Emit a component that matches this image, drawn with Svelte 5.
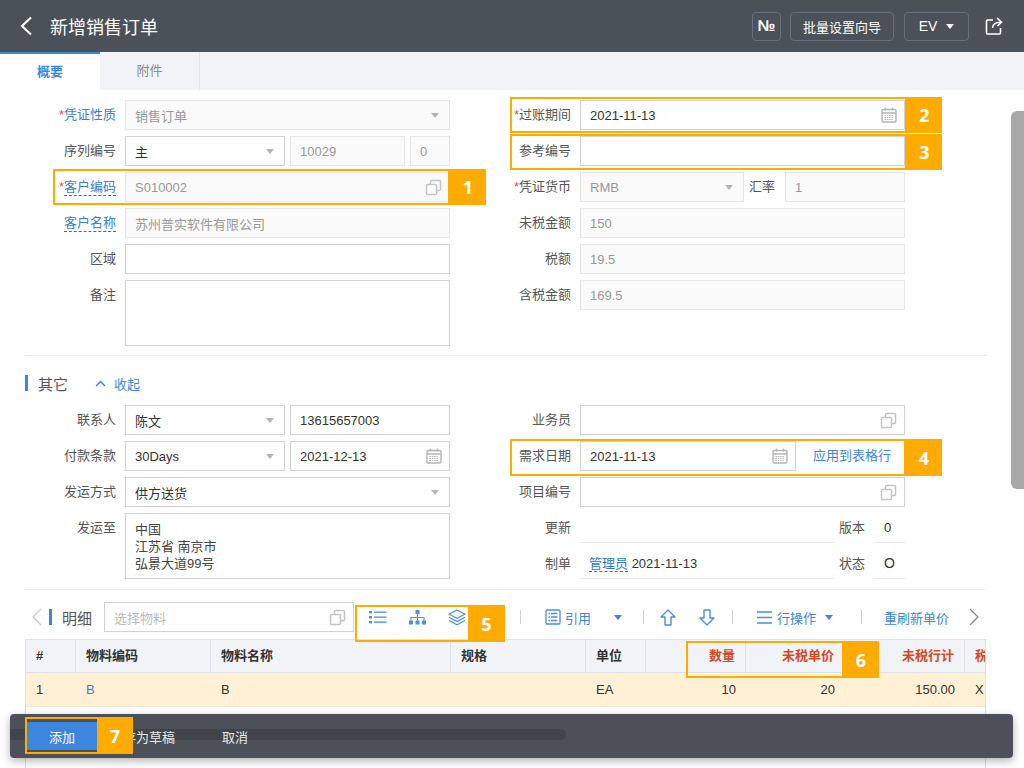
<script>
  const marks = [
    { n: 1, x: 53, y: 169, w: 397, h: 36, bx: 450, bw: 36 },
    { n: 2, x: 510, y: 97, w: 397, h: 36, bx: 907, bw: 35 },
    { n: 3, x: 510, y: 134, w: 397, h: 36, bx: 907, bw: 35 },
    { n: 4, x: 510, y: 439, w: 396, h: 37, bx: 906, bw: 36 },
    { n: 5, x: 355, y: 605, w: 115, h: 37, bx: 468, bw: 37 },
    { n: 6, x: 686, y: 641, w: 158, h: 37, bx: 843, bw: 36 },
    { n: 7, x: 25, y: 717, w: 74, h: 37, bx: 97, bw: 36 },
  ];

  const columns = [
    { label: '#', w: 50 },
    { label: '物料编码', w: 135 },
    { label: '物料名称', w: 240 },
    { label: '规格', w: 135 },
    { label: '单位', w: 60 },
    { label: '数量', w: 100, right: true, warn: true },
    { label: '未税单价', w: 99, right: true, warn: true },
    { label: '未税行计', w: 120, right: true, warn: true },
    { label: '税', w: 22, warn: true },
  ];

  const row = [
    { text: '1' },
    { text: 'B', link: true },
    { text: 'B' },
    { text: '' },
    { text: 'EA' },
    { text: '10', right: true },
    { text: '20', right: true },
    { text: '150.00', right: true },
    { text: 'X' },
  ];
</script>

{#snippet copyIcon()}
  <svg class="ico" width="17" height="17" viewBox="0 0 17 17" fill="none" stroke="#c4c4c4" stroke-width="1.5">
    <rect x="5.5" y="1.5" width="10" height="10" rx="1" />
    <rect x="1.5" y="5.5" width="10" height="10" rx="1" fill="#fff" />
  </svg>
{/snippet}

{#snippet calIcon()}
  <svg class="ico" width="16" height="16" viewBox="0 0 16 16" fill="none" stroke="#b5b5b5" stroke-width="1.4">
    <rect x="1" y="2.5" width="14" height="12.5" rx="1" />
    <path d="M1 6h14M4.5 0.5v3M11.5 0.5v3" />
    <path d="M3.5 8.500h9M3.500 10.500h9M3.500 12.500h9" stroke-width="1.200" stroke-dasharray="1.500 0.800" />
  </svg>
{/snippet}

{#snippet caret()}
  <span class="caret"></span>
{/snippet}

<div class="page">
  <header class="topbar">
    <svg class="back" width="14" height="20" viewBox="0 0 14 20" fill="none" stroke="#fff" stroke-width="2.2">
      <path d="M12 1.5 3 10l9 8.5" />
    </svg>
    <h1 class="title">新增销售订单</h1>
    <button class="tb-btn num">№</button>
    <button class="tb-btn wizard">批量设置向导</button>
    <button class="tb-btn ev">EV <span class="caret white"></span></button>
    <svg class="share" width="18" height="18" viewBox="0 0 18 18" fill="none" stroke="#fff" stroke-width="1.6">
      <path d="M8 3H2.5a1 1 0 0 0-1 1v12a1 1 0 0 0 1 1h12a1 1 0 0 0 1-1v-5" />
      <path d="M7.5 11c.3-3.500 3-5.800 8-5.800" />
      <path d="M12 1l4.500 4.200L12.500 9" />
    </svg>
  </header>

  <nav class="tabs">
    <div class="tab active">概要</div>
    <div class="tab">附件</div>
  </nav>

  <main class="content">
    <section class="form">
      <div class="col">
        <div class="row">
          <span class="lab link"><i>*</i>凭证性质</span>
          <div class="field off grow"><span>销售订单</span>{@render caret()}</div>
        </div>
        <div class="row">
          <span class="lab">序列编号</span>
          <div class="field w160"><span>主</span>{@render caret()}</div>
          <div class="field off w115"><span>10029</span></div>
          <div class="field off grow"><span>0</span></div>
        </div>
        <div class="row">
          <span class="lab link"><i>*</i><u>客户编码</u></span>
          <div class="field off grow"><span>S010002</span>{@render copyIcon()}</div>
        </div>
        <div class="row">
          <span class="lab link"><u>客户名称</u></span>
          <div class="field off grow"><span>苏州普实软件有限公司</span></div>
        </div>
        <div class="row">
          <span class="lab">区域</span>
          <div class="field grow"></div>
        </div>
        <div class="row">
          <span class="lab">备注</span>
          <div class="field grow tall"></div>
        </div>
      </div>

      <div class="col">
        <div class="row">
          <span class="lab"><i>*</i>过账期间</span>
          <div class="field grow"><span>2021-11-13</span>{@render calIcon()}</div>
        </div>
        <div class="row">
          <span class="lab">参考编号</span>
          <div class="field grow"></div>
        </div>
        <div class="row">
          <span class="lab"><i>*</i>凭证货币</span>
          <div class="field off w165"><span>RMB</span>{@render caret()}</div>
          <span class="lab-inline">汇率</span>
          <div class="field off grow"><span>1</span></div>
        </div>
        <div class="row">
          <span class="lab">未税金额</span>
          <div class="field off grow"><span>150</span></div>
        </div>
        <div class="row">
          <span class="lab">税额</span>
          <div class="field off grow"><span>19.5</span></div>
        </div>
        <div class="row">
          <span class="lab">含税金额</span>
          <div class="field off grow"><span>169.5</span></div>
        </div>
      </div>
    </section>

    <div class="rule first"></div>

    <div class="section-head">
      <span class="bar"></span>
      <span class="sec-title">其它</span>
      <svg class="chev" width="11" height="7" viewBox="0 0 11 7" fill="none" stroke="#3d86de" stroke-width="1.5">
        <path d="M1 6l4.500-4.500L10 6" />
      </svg>
      <span class="collapse">收起</span>
    </div>

    <section class="form">
      <div class="col">
        <div class="row">
          <span class="lab">联系人</span>
          <div class="field w160"><span>陈文</span>{@render caret()}</div>
          <div class="field grow"><span>13615657003</span></div>
        </div>
        <div class="row">
          <span class="lab">付款条款</span>
          <div class="field w160"><span>30Days</span>{@render caret()}</div>
          <div class="field grow"><span>2021-12-13</span>{@render calIcon()}</div>
        </div>
        <div class="row">
          <span class="lab">发运方式</span>
          <div class="field grow"><span>供方送货</span>{@render caret()}</div>
        </div>
        <div class="row">
          <span class="lab">发运至</span>
          <div class="field grow tall address">中国<br />江苏省 南京市<br />弘景大道99号</div>
        </div>
      </div>

      <div class="col">
        <div class="row">
          <span class="lab">业务员</span>
          <div class="field grow">{@render copyIcon()}</div>
        </div>
        <div class="row">
          <span class="lab">需求日期</span>
          <div class="field w216"><span>2021-11-13</span>{@render calIcon()}</div>
          <span class="apply">应用到表格行</span>
        </div>
        <div class="row">
          <span class="lab">项目编号</span>
          <div class="field grow">{@render copyIcon()}</div>
        </div>
        <div class="row">
          <span class="lab">更新</span>
          <div class="plain w254"></div>
          <span class="lab-inline ver">版本</span>
          <div class="plain grow"><span>0</span></div>
        </div>
        <div class="row">
          <span class="lab">制单</span>
          <div class="plain w254 maker"><u class="user">管理员</u> 2021-11-13</div>
          <span class="lab-inline ver">状态</span>
          <div class="plain grow"><span class="state">O</span></div>
        </div>
      </div>
    </section>

    <div class="rule second"></div>

    <div class="toolbar">
      <svg class="nav-l" width="10" height="18" viewBox="0 0 10 18" fill="none" stroke="#c9c9c9" stroke-width="1.3">
        <path d="M9 1 1 9l8 8" />
      </svg>
      <span class="bar tall-bar"></span>
      <span class="sec-title detail">明细</span>
      <div class="pick"><span>选择物料</span>{@render copyIcon()}</div>

      <svg class="t-list" width="18" height="14" viewBox="0 0 18 14" fill="#4a8fe0">
        <rect x="0" y="1" width="3" height="2.400" />
        <rect x="0" y="6" width="3" height="2.400" />
        <rect x="0" y="11" width="3" height="2.400" />
        <rect x="5" y="1.500" width="12.500" height="1.300" />
        <rect x="5" y="6.500" width="12.500" height="1.300" />
        <rect x="5" y="11.500" width="12.500" height="1.300" />
      </svg>
      <svg class="t-org" width="17" height="15" viewBox="0 0 17 15" fill="#4a8fe0">
        <rect x="6.500" y="0" width="4" height="4" />
        <rect x="0" y="10.500" width="4" height="4" />
        <rect x="6.500" y="10.500" width="4" height="4" />
        <rect x="13" y="10.500" width="4" height="4" />
        <path d="M8 4h1v3h6.500v3.500h-1V8h-5.500v2.500H8V8H2.500v2.500h-1V7H8z" />
      </svg>
      <svg class="t-stack" width="18" height="17" viewBox="0 0 18 17" fill="none" stroke="#4a8fe0" stroke-width="1.200">
        <path d="M9 1l8 4.200-8 4.200-8-4.200z" />
        <path d="M1 8.300l8 4.200 8-4.200" />
        <path d="M1 11.500l8 4.200 8-4.200" />
      </svg>

      <span class="sep s1"></span>
      <svg class="t-doc" width="16" height="16" viewBox="0 0 16 16" fill="none" stroke="#4a8fe0" stroke-width="1.300">
        <rect x="1" y="1" width="14" height="14" rx="1" />
        <path d="M3.500 4.500h1.500M6 4.500h6.500M3.500 8h1.500M6 8h6.500M3.500 11.500h1.500M6 11.500h6.500" />
      </svg>
      <span class="tool-text quote">引用</span>
      <span class="caret blue c1"></span>
      <span class="sep s2"></span>
      <svg class="t-up" width="16" height="17" viewBox="0 0 16 17" fill="none" stroke="#4a8fe0" stroke-width="1.400">
        <path d="M8 1 1 8h4v8h6V8h4z" stroke-linejoin="round" />
      </svg>
      <svg class="t-down" width="16" height="17" viewBox="0 0 16 17" fill="none" stroke="#4a8fe0" stroke-width="1.400">
        <path d="M8 16 1 9h4V1h6v8h4z" stroke-linejoin="round" />
      </svg>
      <span class="sep s3"></span>
      <svg class="t-lines" width="15" height="13" viewBox="0 0 15 13" fill="none" stroke="#4a8fe0" stroke-width="1.300">
        <path d="M0 1h15M0 6.500h15M0 12h15" />
      </svg>
      <span class="tool-text rowop">行操作</span>
      <span class="caret blue c2"></span>
      <span class="sep s4"></span>
      <span class="tool-text refresh">重刷新单价</span>
      <svg class="nav-r" width="10" height="18" viewBox="0 0 10 18" fill="none" stroke="#888" stroke-width="1.300">
        <path d="M1 1l8 8-8 8" />
      </svg>
    </div>

    <div class="table">
      <div class="thead">
        {#each columns as c}
          <div class="th" class:right={c.right} class:warn={c.warn} style="width:{c.w}px">{c.label}</div>
        {/each}
      </div>
      <div class="tr">
        {#each row as cell, i}
          <div class="td" class:right={cell.right} class:tlink={cell.link} style="width:{columns[i].w}px">{cell.text}</div>
        {/each}
      </div>
    </div>
  </main>

  <div class="scroll-thumb"></div>

  <footer class="actionbar">
    <span class="hscroll"></span>
    <button class="act primary">添加</button>
    <button class="act draft">保存为草稿</button>
    <button class="act cancel">取消</button>
  </footer>

  {#each marks as m}
    <div class="mark" style="left:{m.x}px;top:{m.y}px;width:{m.w}px;height:{m.h}px"></div>
    <div class="badge" style="left:{m.bx}px;top:{m.y}px;width:{m.bw}px;height:{m.h}px">{m.n}</div>
  {/each}
</div>

<style>
  :global(body) {
    margin: 0;
    font-family: "Liberation Sans", "Noto Sans CJK SC", sans-serif;
    font-size: 13px;
    color: #333;
  }

  .page {
    position: relative;
    width: 1024px;
    height: 768px;
    overflow: hidden;
    background: #fff;
  }

  .topbar {
    display: flex;
    align-items: center;
    height: 52px;
    background: #4b5158;
    color: #fff;
  }

  .back {
    margin-left: 19px;
  }

  .title {
    margin: 0 0 0 17px;
    font-size: 18px;
    font-weight: 400;
    color: #fff;
    flex: 1;
  }

  .tb-btn {
    height: 29px;
    padding: 0;
    background: transparent;
    border: 1px solid #66717f;
    border-radius: 4px;
    color: #fff;
    font: inherit;
    font-size: 13px;
  }

  .num {
    width: 29px;
    font-weight: 700;
    font-size: 16px;
  }

  .wizard {
    width: 104px;
    margin-left: 9px;
  }

  .ev {
    width: 65px;
    margin-left: 10px;
    font-size: 14px;
  }

  .share {
    margin: 0 21px 0 16px;
  }

  .tabs {
    display: flex;
    height: 38px;
    background: #f2f3f7;
  }

  .tab {
    width: 99px;
    line-height: 38px;
    text-align: center;
    color: #8a8a8a;
    border-right: 1px solid #e2e3e7;
  }

  .tab.active {
    width: 100px;
    box-sizing: border-box;
    border-right: 0;
    border-top: 2px solid #3d86de;
    line-height: 36px;
    background: #fff;
    color: #3d86de;
    font-weight: 700;
  }

  .content {
    width: 962px;
    padding: 10px 0 0 25px;
  }

  .form {
    display: grid;
    grid-template-columns: 425px 425px;
    column-gap: 30px;
  }

  .col {
    display: flex;
    flex-direction: column;
    gap: 6px;
  }

  .row {
    display: flex;
    align-items: flex-start;
    gap: 5px;
  }

  .lab {
    width: 91px;
    margin-right: 4px;
    line-height: 30px;
    text-align: right;
    color: #555;
    white-space: nowrap;
  }

  .lab i {
    color: #f0502d;
    font-style: normal;
  }

  .lab.link {
    color: #3d7fd0;
  }

  .lab u {
    text-decoration: none;
    border-bottom: 1px dashed #2f6fc0;
    padding-bottom: 1px;
  }

  .lab-inline {
    width: 31px;
    line-height: 30px;
    color: #555;
    white-space: nowrap;
  }

  .field {
    box-sizing: border-box;
    display: flex;
    align-items: center;
    justify-content: space-between;
    height: 30px;
    padding: 0 9px;
    border: 1px solid #d2d2d2;
    background: #fff;
    color: #333;
    white-space: nowrap;
  }

  .field.off {
    background: #fafafa;
    border-color: #e6e6e6;
    color: #999;
  }

  .field:empty {
    padding: 0;
  }

  .grow {
    flex: 1;
    min-width: 0;
  }

  .tall {
    height: 66px;
  }

  .w160 { width: 160px; }
  .w115 { width: 115px; }
  .w165 { width: 164px; }
  .w216 { width: 216px; }
  .w254 { width: 254px; }

  .field .ico {
    margin-left: auto;
    margin-right: -2px;
  }

  .caret {
    display: inline-block;
    width: 0;
    height: 0;
    margin-left: auto;
    margin-right: 1px;
    border-left: 4.5px solid transparent;
    border-right: 4.5px solid transparent;
    border-top: 5px solid #b5b5b5;
  }

  .caret.white {
    margin: 0 0 2px 5px;
    border-top-color: #fff;
  }

  .caret.blue {
    margin: 0;
    border-top-color: #3d86de;
  }

  .address {
    display: block;
    padding-top: 7px;
    line-height: 17px;
    color: #444;
  }

  .apply {
    margin-left: 12px;
    line-height: 30px;
    color: #3d86de;
  }

  .plain {
    box-sizing: border-box;
    height: 30px;
    line-height: 29px;
    border-bottom: 1px solid #eaeaea;
  }

  .plain.grow {
    padding-left: 10px;
  }

  .ver {
    width: 30px;
  }

  .state {
    font-size: 14px;
  }

  .maker {
    padding-left: 9px;
  }

  .user {
    text-decoration: none;
    color: #2f78d0;
    border-bottom: 1px dashed #2f6fc0;
  }

  .rule {
    height: 1px;
    background: #eee;
  }

  .rule.first {
    margin-top: 9px;
  }

  .rule.second {
    margin-top: 10px;
    width: 960px;
  }

  .section-head {
    display: flex;
    align-items: center;
    height: 49px;
    padding-top: 5px;
    box-sizing: border-box;
  }

  .bar {
    width: 3px;
    height: 16px;
    background: #3d86de;
  }

  .sec-title {
    margin-left: 10px;
    font-size: 15px;
    color: #555;
  }

  .chev {
    margin-left: 27px;
  }

  .collapse {
    margin-left: 8px;
    color: #3d86de;
  }

  .toolbar {
    position: relative;
    display: flex;
    align-items: center;
    height: 30px;
    margin-top: 12px;
  }

  /* spacing along the row, tuned item by item */
  .nav-l { margin-left: 7px; }
  .tall-bar { margin-left: 7px; }
  .detail { margin-left: 10px; }

  .pick {
    box-sizing: border-box;
    display: flex;
    align-items: center;
    justify-content: space-between;
    width: 250px;
    height: 30px;
    margin-left: 12px;
    padding: 0 7px 0 9px;
    border: 1px solid #d2d2d2;
    color: #bbb;
  }

  .t-list { margin-left: 15px; }
  .t-org { margin-left: 22px; }
  .t-stack { margin-left: 22px; }

  .sep {
    width: 1px;
    height: 14px;
    background: #cfcfcf;
  }

  .s1 { margin-left: 54px; }
  .t-doc { margin-left: 24px; }

  .tool-text {
    color: #3d86de;
    white-space: nowrap;
  }

  .quote { margin-left: 4px; }
  .c1 { margin-left: 23px !important; }
  .s2 { margin-left: 21px; }
  .t-up { margin-left: 16px; }
  .t-down { margin-left: 23px; }
  .s3 { margin-left: 17px; }
  .t-lines { margin-left: 24px; }
  .rowop { margin-left: 5px; }
  .c2 { margin-left: 9px !important; }
  .s4 { margin-left: 28px; }
  .refresh { margin-left: 22px; }
  .nav-r { margin-left: 20px; }

  .table {
    box-sizing: border-box;
    width: 961px;
    height: 140px;
    margin-top: 7px;
    border: 1px solid #dfe1e6;
    border-bottom: 0;
    overflow: hidden;
  }

  .thead,
  .tr {
    display: flex;
    width: 1000px;
  }

  .thead {
    height: 32px;
    background: #f2f3f7;
    border-bottom: 1px solid #dfe1e6;
  }

  .th {
    box-sizing: border-box;
    flex: none;
    padding: 0 10px;
    line-height: 32px;
    font-weight: 700;
    color: #333;
    border-right: 1px solid #dfe1e6;
    white-space: nowrap;
    overflow: hidden;
  }

  .th.warn {
    color: #d8481c;
  }

  .th:last-child {
    border-right: 0;
  }

  .tr {
    height: 33px;
    background: #fff0d6;
    border-bottom: 1px solid #f5e6cc;
  }

  .td {
    box-sizing: border-box;
    flex: none;
    padding: 0 10px;
    line-height: 33px;
    color: #333;
    white-space: nowrap;
    overflow: hidden;
  }

  .right {
    text-align: right;
  }

  .tlink {
    color: #3d7fd0;
  }

  .scroll-thumb {
    position: absolute;
    left: 1011px;
    top: 111px;
    width: 13px;
    height: 378px;
    background: #a8a8a8;
    border-radius: 6px 0 0 6px;
  }

  .actionbar {
    position: absolute;
    left: 10px;
    top: 714px;
    width: 1003px;
    height: 44px;
    display: flex;
    align-items: center;
    background: rgba(72, 78, 86, 0.98);
    border-radius: 4px;
    box-shadow: 0 3px 8px rgba(0, 0, 0, 0.3);
  }

  .hscroll {
    position: absolute;
    left: 0;
    top: 15px;
    width: 556px;
    height: 11px;
    background: #40454c;
    border-radius: 0 6px 6px 0;
  }

  .act {
    position: relative;
    padding: 0;
    border: 0;
    background: transparent;
    color: #e8e8e8;
    font: inherit;
    white-space: nowrap;
  }

  .primary {
    width: 70px;
    height: 28px;
    margin-left: 17px;
    background: #3d86de;
    color: #fff;
  }

  .draft {
    margin-left: 13px;
  }

  .cancel {
    margin-left: 47px;
  }

  .mark {
    position: absolute;
    box-sizing: border-box;
    border: 2px solid #ffab00;
    pointer-events: none;
  }

  .badge {
    position: absolute;
    display: flex;
    align-items: center;
    justify-content: center;
    background: #ffab00;
    color: #fff;
    font-family: "Open Sans", sans-serif;
    font-weight: 700;
    font-size: 18px;
  }
</style>
